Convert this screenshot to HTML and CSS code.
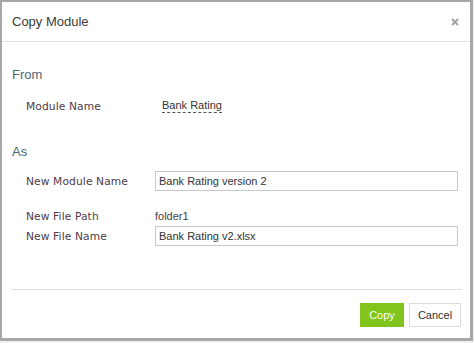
FILE: index.html
```html
<!DOCTYPE html>
<html lang="en">
<head>
  <meta charset="UTF-8" />
  <title>Copy Module</title>
  <link rel="stylesheet" href="styles.css">
</head>
<body>

  <div class="dialog">
    <div class="dialog-header">
      <span class="dialog-title">Copy Module</span>
      <button class="close-btn" aria-label="Close">
        <svg width="8" height="8" viewBox="0 0 8 8">
          <path d="M1 1 L7 7 M7 1 L1 7" stroke="#a3a3a3" stroke-width="2" />
        </svg>
      </button>
    </div>

    <div class="dialog-body">
      <h4 class="section from">From</h4>
      <div class="row row-module">
        <span class="label">Module Name</span>
        <span class="editable">Bank Rating</span>
      </div>

      <h4 class="section as">As</h4>
      <div class="row row-new-name">
        <span class="label">New Module Name</span>
        <input class="field" type="text" value="Bank Rating version 2" />
      </div>
      <div class="row row-path">
        <span class="label">New File Path</span>
        <span class="value">folder1</span>
      </div>
      <div class="row row-file">
        <span class="label">New File Name</span>
        <input class="field" type="text" value="Bank Rating v2.xlsx" />
      </div>
    </div>

    <div class="dialog-footer">
      <button class="btn btn-copy">Copy</button>
      <button class="btn btn-cancel">Cancel</button>
    </div>
  </div>

</body>
</html>
```

FILE: styles.css
```css
body {
  margin: 0;
  padding: 0;
  background: #f0f0f0;
  font-family: "Liberation Sans", Arial, sans-serif;
}

.dialog {
  box-sizing: border-box;
  width: 473px;
  height: 341px;
  background: #fff;
  border: 2px solid #a7a7a7;
  border-right-width: 3px;
  border-bottom-width: 3px;
  display: flex;
  flex-direction: column;
}

.dialog-header {
  height: 39px;
  display: flex;
  align-items: center;
  justify-content: space-between;
  padding: 0 10px;
  border-bottom: 1px solid #e3e3e3;
}

.dialog-title {
  font-size: 13px;
  color: #3a3a3a;
}

.close-btn {
  background: none;
  border: none;
  padding: 0;
  margin-right: 1px;
  display: flex;
  cursor: pointer;
}

.dialog-body {
  flex: 1;
  padding: 0 12px 0 10px;
}

.section {
  margin: 0;
  font-size: 13px;
  font-weight: normal;
  line-height: 16px;
  color: #4e6474;
}

.section.from {
  margin-top: 25px;
}

.section.as {
  margin-top: 28px;
}

.row {
  display: flex;
  align-items: center;
  padding-left: 14px;
  height: 20px;
}

.label {
  width: 129px;
  flex-shrink: 0;
  font-family: "DejaVu Sans", Verdana, sans-serif;
  font-size: 10.7px;
  letter-spacing: 0.1px;
  color: #4f3a46;
}

.row-module {
  margin-top: 13px;
}

.row-new-name {
  margin-top: 11px;
}

.row-path {
  margin-top: 15px;
}

.row-file {
  margin-top: 0;
}

.editable {
  margin-left: 7px;
  font-size: 11px;
  color: #333;
  border-bottom: 1px dashed #555;
  line-height: 13px;
}

.value {
  font-size: 11px;
  color: #4a3a46;
}

.field {
  flex: 1;
  box-sizing: border-box;
  height: 20px;
  margin: 0;
  padding: 0 3px;
  border: 1px solid #c9c9c9;
  font-family: "Liberation Sans", Arial, sans-serif;
  font-size: 11px;
  color: #333;
  outline: none;
}

.dialog-footer {
  margin: 0 8px 0 10px;
  border-top: 1px solid #dedede;
  padding: 13px 1px 11px 0;
  display: flex;
  justify-content: flex-end;
  gap: 5px;
}

.btn {
  height: 24px;
  font-family: "Liberation Sans", Arial, sans-serif;
  font-size: 11px;
  padding: 0;
  cursor: pointer;
}

.btn-copy {
  width: 44px;
  background: #80c41c;
  border: 1px solid #80c41c;
  color: #fff;
}

.btn-cancel {
  width: 52px;
  background: #fff;
  border: 1px solid #dcdcdc;
  color: #333;
}
```
